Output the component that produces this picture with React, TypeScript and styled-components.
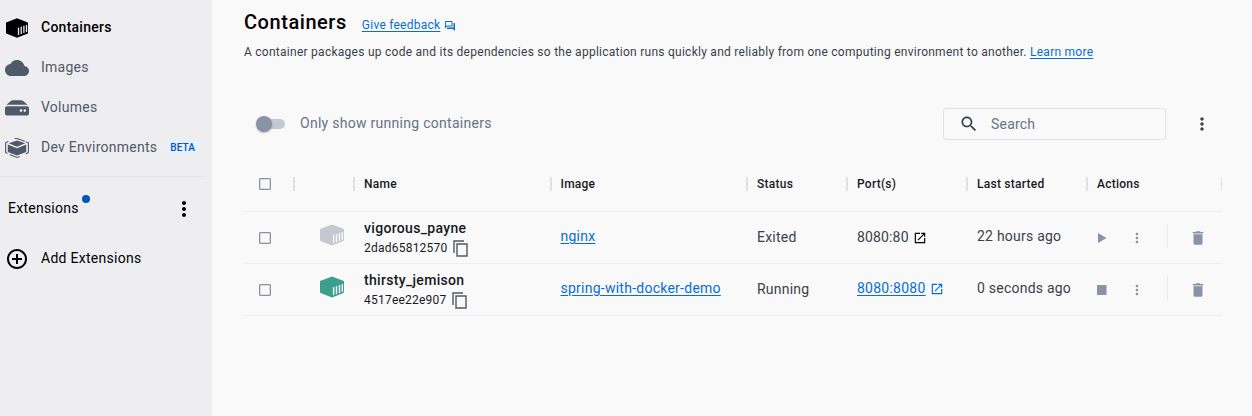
import React from 'react';
import styled, { createGlobalStyle } from 'styled-components';

const Global = createGlobalStyle`
  * { box-sizing: border-box; }
  body { margin: 0; background: #f9f9fa; font-family: Roboto, "Liberation Sans", sans-serif; font-size: 14px; color: #000; overflow: hidden; }
  svg { display: block; flex: none; }
`;

const Page = styled.div`
  display: flex;
  height: 416px;
`;

const Sidebar = styled.nav`
  width: 212px;
  flex: none;
  background: #eeeef1;
  padding-top: 7px;
`;

const NavItem = styled.div<{ $active?: boolean }>`
  display: flex;
  align-items: center;
  height: 40px;
  padding-left: 5px;
  color: ${(p) => (p.$active ? '#000' : '#505968')};
  font-weight: ${(p) => (p.$active ? 500 : 400)};
  letter-spacing: 0.25px;
`;

const NavIcon = styled.span`
  width: 36px;
  padding-top: 1px;
`;

const Beta = styled.span`
  margin-left: 9px;
  padding: 0 4px;
  height: 16px;
  line-height: 17px;
  border-radius: 3px;
  background: #e5f2fc;
  color: #0055bf;
  font-size: 10px;
  font-weight: 500;
  letter-spacing: 0.1px;
`;

const Divider = styled.div`
  height: 1px;
  width: 204px;
  margin-top: 9px;
  background: #e1e2e6;
`;

const ExtensionsRow = styled.div`
  display: flex;
  align-items: center;
  height: 62px;
  padding: 0 16px 0 8px;
  letter-spacing: 0.25px;
  svg { margin-top: 2px; }
`;

const Dot = styled.span`
  width: 8px;
  height: 8px;
  margin: 0 0 18px 3px;
  border-radius: 50%;
  background: #0055bf;
`;

const Spacer = styled.span`
  flex: 1;
`;

const AddItem = styled.div`
  display: flex;
  align-items: center;
  height: 38px;
  padding-left: 5px;
  letter-spacing: 0.27px;
`;

const Main = styled.main`
  width: 978px;
  margin-left: 32px;
`;

const TitleRow = styled.div`
  display: flex;
  height: 43px;
`;

const Title = styled.h1`
  margin: 10px 15px 0 0;
  font-size: 20px;
  line-height: 24px;
  font-weight: 500;
  letter-spacing: 0.55px;
`;

const Link = styled.a<{ $size?: number }>`
  color: #086dd7;
  font-size: ${(p) => p.$size ?? 14}px;
  letter-spacing: 0.25px;
  text-decoration: underline;
  text-underline-offset: 2px;
`;

const Feedback = styled.div`
  display: flex;
  gap: 4px;
  padding-top: 17px;
  line-height: 16px;
  color: #086dd7;
  svg { margin-top: 3px; }
`;

const Description = styled.p`
  margin: 0;
  font-size: 12px;
  line-height: 18px;
  letter-spacing: 0.263px;
  color: #393f49;
  white-space: nowrap;
`;

const Toolbar = styled.div`
  display: flex;
  align-items: center;
  height: 32px;
  margin-top: 47px;
  padding: 0 10px 0 12px;
`;

const Switch = styled.span`
  display: flex;
  align-items: center;
  width: 25px;
  height: 10px;
  margin-left: 4px;
  border-radius: 5px;
  background: #c4c8d1;
`;

const Knob = styled.span`
  flex: none;
  width: 16px;
  height: 16px;
  margin-left: -4px;
  border-radius: 50%;
  background: #8993a5;
  box-shadow: 0 1px 2px rgba(0, 0, 0, 0.25);
`;

const SwitchLabel = styled.span`
  margin-left: 15px;
  padding-bottom: 2px;
  color: #677285;
  letter-spacing: 0.28px;
`;

const SearchBox = styled.div`
  display: flex;
  align-items: center;
  width: 223px;
  height: 32px;
  margin-right: 26px;
  padding-left: 15px;
  gap: 12px;
  border: 1px solid #e1e2e6;
  border-radius: 3px;
  color: #677285;
  letter-spacing: 0.2px;
`;

const columns = '50px 60px 196.5px 196.5px 100px 120px 120px 135px';

const HeaderRow = styled.div`
  display: grid;
  grid-template-columns: ${columns};
  height: 56px;
  margin-top: 16px;
  border-bottom: 1px solid #ececee;
`;

const HeaderCell = styled.div<{ $last?: boolean; $pad?: number }>`
  display: flex;
  align-items: center;
  padding-left: ${(p) => p.$pad ?? 10}px;
  font-size: 12px;
  font-weight: 500;
  letter-spacing: 0.25px;
  color: #17191e;
  &::after {
    content: '';
    width: ${(p) => (p.$last ? 1 : 2)}px;
    height: 14px;
    margin-left: auto;
    margin-right: ${(p) => (p.$last ? 0 : -1)}px;
    background: #e0e0e2;
  }
`;

const Row = styled.div`
  display: grid;
  grid-template-columns: ${columns};
  height: 52px;
  border-bottom: 1px solid #ececee;
`;

const Cell = styled.div<{ $lift?: number }>`
  display: flex;
  align-items: center;
  padding: 0 0 ${(p) => p.$lift ?? 2}px 10px;
  letter-spacing: 0.23px;
  color: #393f49;
  white-space: nowrap;
`;

const CheckCell = styled(Cell)`
  padding: 0 0 0 15px;
`;

const IconCell = styled(Cell)`
  padding: 0 0 5px 26px;
`;

const NameCell = styled(Cell)`
  flex-direction: column;
  padding-bottom: 0;
  align-items: flex-start;
`;

const ContainerName = styled.div`
  height: 20px;
  margin-top: 6px;
  line-height: 20px;
  font-weight: 500;
  letter-spacing: 0.32px;
  color: #17191e;
`;

const ContainerId = styled.div`
  display: flex;
  align-items: center;
  gap: 5px;
  height: 20px;
  font-size: 12px;
  letter-spacing: 0.23px;
  color: #17191e;
`;

const PortCell = styled(Cell)`
  gap: 4px;
  letter-spacing: 0.15px;
  svg { margin-top: 2px; }
`;

const ActionCell = styled(Cell)`
  color: #8993a5;
`;

const ActionSlot = styled.span<{ $w: number }>`
  width: ${(p) => p.$w}px;
  padding-top: 2px;
`;

const ActionDivider = styled.span`
  width: 1px;
  height: 24px;
  margin: 0 21px 2px 0;
  background: #e9eaec;
`;

const Checkbox = styled.span`
  width: 12px;
  height: 12px;
  margin-top: 1px;
  border: 1px solid #8993a5;
  border-radius: 1px;
  box-shadow: inset 0 0 0 0.5px #b5bbc7;
`;

function ContainerIcon({ fill, bars = '#f9f9fa' }: { fill: string; bars?: string }) {
  return (
    <svg width="24" height="22" viewBox="0 0 24 22">
      <path d="M12 .5 23.3 4.8Q24 5 24 5.8V15.8Q24 16.7 23.3 17L12 21.6.7 17Q0 16.7 0 15.8V5.8Q0 5 .7 4.8Z" fill={fill} />
      <path d="M13.6 11V19M16.5 10V18M19.5 9V17M22.3 8V15.8" stroke={bars} strokeWidth="1.4" />
    </svg>
  );
}

function NavContainerIcon() {
  return (
    <svg width="24" height="20" viewBox="0 0 24 20">
      <path d="M12 .3 22.2 4.2Q23 4.5 23 5.3V14.7Q23 15.5 22.2 15.8L12 19.7 1.8 15.8Q1 15.5 1 14.7V5.3Q1 4.5 1.8 4.2Z" fill="#000" />
      <path d="M13.5 9.7V17M16.2 8.8V16M18.9 7.8V15M21.5 7V14" stroke="#eeeef1" strokeWidth="1.3" />
    </svg>
  );
}

function PathIcon({ d, size, color = 'currentColor' }: { d: string; size: number; color?: string }) {
  return (
    <svg width={size} height={size} viewBox="0 0 24 24" fill={color}>
      <path d={d} />
    </svg>
  );
}

const MORE = 'M12 8c1.1 0 2-.9 2-2s-.9-2-2-2-2 .9-2 2 .9 2 2 2zm0 2c-1.1 0-2 .9-2 2s.9 2 2 2 2-.9 2-2-.9-2-2-2zm0 6c-1.1 0-2 .9-2 2s.9 2 2 2 2-.9 2-2-.9-2-2-2z';
const CLOUD = 'M19.35 10.04C18.67 6.59 15.64 4 12 4 9.11 4 6.6 5.64 5.35 8.04 2.34 8.36 0 10.91 0 14c0 3.31 2.69 6 6 6h13c2.76 0 5-2.24 5-5 0-2.64-2.05-4.78-4.65-4.96z';
const SEARCH = 'M15.5 14h-.79l-.28-.27C15.41 12.59 16 11.11 16 9.5 16 5.91 13.09 3 9.5 3S3 5.91 3 9.5 5.91 16 9.5 16c1.61 0 3.09-.59 4.23-1.57l.27.28v.79l5 4.99L20.49 19l-4.99-5zm-6 0C7.01 14 5 11.99 5 9.5S7.01 5 9.5 5 14 7.01 14 9.5 11.99 14 9.5 14z';
const ADD = 'M13 7h-2v4H7v2h4v4h2v-4h4v-2h-4V7zm-1-5C6.48 2 2 6.48 2 12s4.48 10 10 10 10-4.48 10-10S17.52 2 12 2zm0 18c-4.41 0-8-3.59-8-8s3.59-8 8-8 8 3.59 8 8-3.59 8-8 8z';
const OPEN = 'M19 19H5V5h7V3H3v18h18v-9h-2v7zM14 3v2h3.59l-9.83 9.83 1.41 1.41L19 6.41V10h2V3h-7z';
const TRASH = 'M6 19c0 1.1.9 2 2 2h8c1.1 0 2-.9 2-2V7H6v12zM19 4h-3.5l-1-1h-5l-1 1H5v2h14V4z';
const FORUM = 'M15 4v7H5.17L4 12.17V4h11m1-2H3c-.55 0-1 .45-1 1v14l4-4h10c.55 0 1-.45 1-1V3c0-.55-.45-1-1-1zm5 4h-2v9H6v2c0 .55.45 1 1 1h11l4 4V7c0-.55-.45-1-1-1z';

function VolumeIcon() {
  return (
    <svg width="24" height="16" viewBox="0 0 24 16">
      <path d="M6.2.7Q6.8.3 7.6.3H16.4Q17.2.3 17.8.7L22.6 4.8H1.4Z" fill="#505968" />
      <path d="M2 6.2H22Q24 6.2 24 8V13.5Q24 15.5 22 15.5H2Q0 15.5 0 13.5V8Q0 6.2 2 6.2Z" fill="#505968" />
      <circle cx="16" cy="10.6" r="1.3" fill="#eeeef1" />
      <circle cx="19.8" cy="10.6" r="1.3" fill="#eeeef1" />
    </svg>
  );
}

function DevIcon() {
  return (
    <svg width="24" height="20" viewBox="0 0 24 20" fill="none">
      <path d="M12 2.4 20.3 5.3 12 8.8 3.7 5.3Z" fill="#505968" />
      <path d="M2.8 6.4 12 10.3 21.2 6.4V14L12 17.6 2.8 14Z" fill="#505968" />
      <path d="M9.6.5H12L19.8 3.3M3.4 3.6.6 4.8V14.4L2.4 15.5M20.8 3.7 23.4 4.8V14.4L20.8 15.9M4.6 16.5 12 19.4 14.6 18.5" stroke="#505968" strokeWidth="1.1" />
    </svg>
  );
}

function CopyIcon() {
  return (
    <svg width="16" height="17" viewBox="0 0 16 17" fill="none" stroke="#505968">
      <path d="M11 1H1V13" strokeWidth="1.4" />
      <path d="M4 4H14V16H4Z" strokeWidth="1.4" />
    </svg>
  );
}

interface ContainerProps {
  name: string;
  id: string;
  image: string;
  running?: boolean;
  port: string;
  started: string;
}

function ContainerRow({ name, id, image, running, port, started }: ContainerProps) {
  return (
    <Row>
      <CheckCell><Checkbox /></CheckCell>
      <IconCell><ContainerIcon fill={running ? '#3c9f8d' : '#c4c8d1'} /></IconCell>
      <NameCell>
        <ContainerName>{name}</ContainerName>
        <ContainerId>{id}<CopyIcon /></ContainerId>
      </NameCell>
      <Cell $lift={3}><Link>{image}</Link></Cell>
      <Cell>{running ? 'Running' : 'Exited'}</Cell>
      <PortCell $lift={running ? 3 : 2}>
        {running ? <Link>{port}</Link> : port}
        <PathIcon d={OPEN} size={14} color={running ? '#086dd7' : '#000'} />
      </PortCell>
      <Cell $lift={4}>{started}</Cell>
      <ActionCell>
        <ActionSlot $w={32}>
          <svg width="10" height="10" viewBox="0 0 10 10" fill="currentColor">
            {running ? <path d="M-.5 0H9.5V10H-.5Z" /> : <path d="M1 0 9.5 5 1 10Z" />}
          </svg>
        </ActionSlot>
        <ActionSlot $w={38}><PathIcon d={MORE} size={16} /></ActionSlot>
        <ActionDivider />
        <ActionSlot $w={18}><PathIcon d={TRASH} size={18} /></ActionSlot>
      </ActionCell>
    </Row>
  );
}

export default function App() {
  return (
    <Page>
      <Global />
      <Sidebar>
        <NavItem $active><NavIcon><NavContainerIcon /></NavIcon>Containers</NavItem>
        <NavItem><NavIcon><PathIcon d={CLOUD} size={24} /></NavIcon>Images</NavItem>
        <NavItem><NavIcon><VolumeIcon /></NavIcon>Volumes</NavItem>
        <NavItem><NavIcon><DevIcon /></NavIcon>Dev Environments<Beta>BETA</Beta></NavItem>
        <Divider />
        <ExtensionsRow>Extensions<Dot /><Spacer /><PathIcon d={MORE} size={24} /></ExtensionsRow>
        <AddItem><NavIcon><PathIcon d={ADD} size={24} /></NavIcon>Add Extensions</AddItem>
      </Sidebar>
      <Main>
        <TitleRow>
          <Title>Containers</Title>
          <Feedback><Link $size={12}>Give feedback</Link><PathIcon d={FORUM} size={12} /></Feedback>
        </TitleRow>
        <Description>
          A container packages up code and its dependencies so the application runs quickly and reliably from one computing environment to another. <Link $size={12}>Learn more</Link>
        </Description>
        <Toolbar>
          <Switch><Knob /></Switch>
          <SwitchLabel>Only show running containers</SwitchLabel>
          <Spacer />
          <SearchBox><PathIcon d={SEARCH} size={20} color="#393f49" />Search</SearchBox>
          <PathIcon d={MORE} size={20} color="#393f49" />
        </Toolbar>
        <HeaderRow>
          <HeaderCell $pad={15}><Checkbox /></HeaderCell>
          <HeaderCell />
          <HeaderCell>Name</HeaderCell>
          <HeaderCell>Image</HeaderCell>
          <HeaderCell>Status</HeaderCell>
          <HeaderCell>Port(s)</HeaderCell>
          <HeaderCell>Last started</HeaderCell>
          <HeaderCell $last>Actions</HeaderCell>
        </HeaderRow>
        <ContainerRow name="vigorous_payne" id="2dad65812570" image="nginx" port="8080:80" started="22 hours ago" />
        <ContainerRow name="thirsty_jemison" id="4517ee22e907" image="spring-with-docker-demo" running port="8080:8080" started="0 seconds ago" />
      </Main>
    </Page>
  );
}
